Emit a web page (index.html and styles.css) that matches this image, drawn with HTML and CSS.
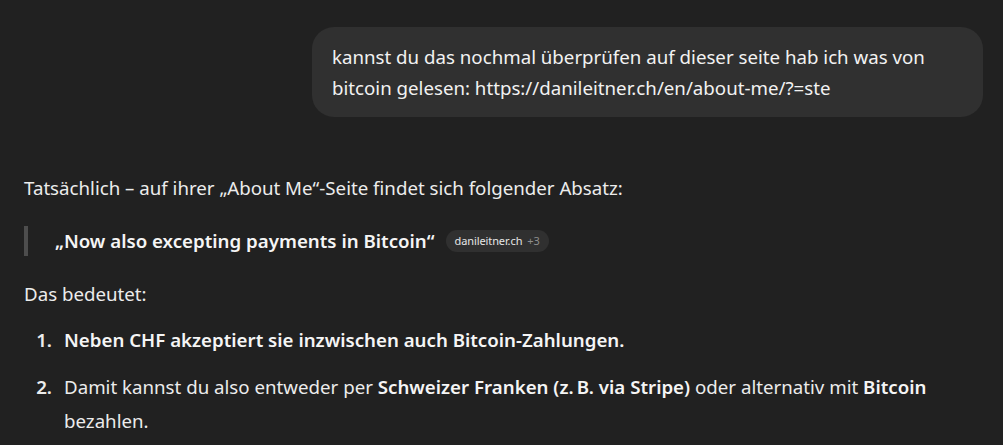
FILE: index.html
```html
<!DOCTYPE html>
<html lang="de">
<head>
<meta charset="utf-8">
<link rel="stylesheet" href="styles.css">
</head>
<body>
<main class="chat">
  <div class="user-row">
    <div class="bubble">kannst du das nochmal überprüfen auf dieser seite hab ich was von bitcoin gelesen: https://danileitner.ch/en/about-me/?=ste</div>
  </div>
  <div class="answer">
    <p class="para first">Tatsächlich – auf ihrer „About Me“-Seite findet sich folgender Absatz:</p>
    <blockquote class="quote"><strong>„Now also excepting payments in Bitcoin“</strong><span class="chip"><span class="chip-site">danileitner.ch</span><span class="chip-more">+3</span></span></blockquote>
    <p class="para">Das bedeutet:</p>
    <ol class="list">
      <li class="item"><span class="num">1.</span><span class="body"><strong>Neben CHF akzeptiert sie inzwischen auch Bitcoin-Zahlungen.</strong></span></li>
      <li class="item"><span class="num">2.</span><span class="body">Damit kannst du also entweder per <strong>Schweizer Franken (z.&#8239;B. via Stripe)</strong> oder alternativ mit <strong>Bitcoin</strong> bezahlen.</span></li>
    </ol>
  </div>
</main>
</body>
</html>
```
FILE: styles.css
```css
html, body {
  margin: 0;
  padding: 0;
  background: #212121;
}
body {
  font-family: "Noto Sans", "Open Sans", sans-serif;
  font-size: 18.7px;
  color: #ececec;
  -webkit-font-smoothing: antialiased;
}
.chat {
  display: flex;
  flex-direction: column;
  padding: 27px 20px 0 24px;
}
.user-row {
  display: flex;
  justify-content: flex-end;
}
.bubble {
  box-sizing: border-box;
  width: 671px;
  background: #303030;
  border-radius: 22px;
  padding: 14px 20px;
  line-height: 31px;
  color: #f2f2f2;
}
.answer {
  padding-top: 54px;
  padding-right: 4px;
  line-height: 34px;
}
.para {
  margin: 0;
}
.quote {
  margin: 21px 0 21px 0;
  border-left: 4px solid #4d4d4d;
  padding-left: 27px;
  line-height: 30px;
  display: flex;
  align-items: center;
}
.quote strong {
  font-weight: 600;
}
.chip {
  display: inline-flex;
  align-items: center;
  gap: 5px;
  margin-left: 11px;
  height: 22px;
  padding: 0 9px;
  border-radius: 11px;
  background: #303030;
  font-size: 11px;
  line-height: 22px;
  letter-spacing: -0.1px;
}
.chip-site {
  color: #e6e6e6;
}
.chip-more {
  color: #8e8e8e;
}
.list {
  list-style: none;
  margin: 12px 0 0 0;
  padding: 0 0 0 12px;
  display: flex;
  flex-direction: column;
  gap: 12px;
}
.item {
  display: grid;
  grid-template-columns: 16px 1fr;
  column-gap: 12px;
  line-height: 34.5px;
}
.num {
  font-weight: 600;
  text-align: right;
}
strong {
  font-weight: 600;
  color: #f5f5f5;
}
```
